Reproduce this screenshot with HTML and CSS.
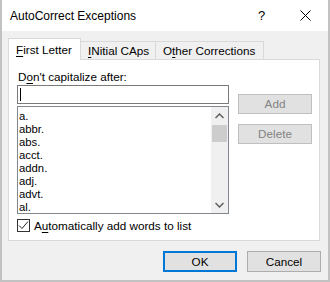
FILE: index.html
```html
<!DOCTYPE html>
<html lang="en">

<head>
  <meta charset="UTF-8" />
  <title>AutoCorrect Exceptions</title>
  <link rel="stylesheet" href="styles.css">
</head>

<body>
  <div class="window">
    <div class="titlebar">
      <span class="title">AutoCorrect Exceptions</span>
      <span class="help">?</span>
      <svg class="close" width="11" height="11" viewBox="0 0 11 11">
        <path d="M0.5 0.5 L10.5 10.5 M10.5 0.5 L0.5 10.5" stroke="#000" stroke-width="1" fill="none" />
      </svg>
    </div>

    <div class="content">
      <div class="tabs">
        <div class="tab tab-active"><u>F</u>irst Letter</div>
        <div class="tab tab-second"><u>I</u>Nitial CAps</div>
        <div class="tab tab-third">O<u>t</u>her Corrections</div>
      </div>

      <div class="panel">
        <div class="row">
          <div class="left">
            <div class="label">D<u>o</u>n't capitalize after:</div>
            <div class="input"><span class="caret"></span></div>
            <div class="list">
              <div class="items">
                <div>a.</div>
                <div>abbr.</div>
                <div>abs.</div>
                <div>acct.</div>
                <div>addn.</div>
                <div>adj.</div>
                <div>advt.</div>
                <div>al.</div>
              </div>
              <div class="scrollbar">
                <div class="arrow">
                  <svg width="9" height="6" viewBox="0 0 9 6">
                    <path d="M0.5 5 L4.5 1 L8.5 5" stroke="#606060" stroke-width="1.5" fill="none" />
                  </svg>
                </div>
                <div class="track"><div class="thumb"></div></div>
                <div class="arrow">
                  <svg width="9" height="6" viewBox="0 0 9 6">
                    <path d="M0.5 1 L4.5 5 L8.5 1" stroke="#606060" stroke-width="1.5" fill="none" />
                  </svg>
                </div>
              </div>
            </div>
          </div>
          <div class="right">
            <div class="btn btn-disabled">Add</div>
            <div class="btn btn-disabled">Delete</div>
          </div>
        </div>

        <div class="check-row">
          <span class="checkbox">
            <svg width="11" height="11" viewBox="0 0 11 11">
              <path d="M1 5.5 L4 8.5 L10 1.5" stroke="#222" stroke-width="1" fill="none" />
            </svg>
          </span>
          <span>A<u>u</u>tomatically add words to list</span>
        </div>
      </div>

      <div class="footer">
        <div class="btn btn-default">OK</div>
        <div class="btn">Cancel</div>
      </div>
    </div>
  </div>
</body>

</html>
```

FILE: styles.css
```css
body {
  margin: 0;
  padding: 0;
  font-family: 'Liberation Sans', Arial, sans-serif;
  font-size: 11.7px;
  color: #000;
  background: #fff;
}

u {
  text-decoration-thickness: 1px;
  text-underline-offset: 2px;
}

.window {
  width: 326px;
  height: 280px;
  border: 2px solid #c2c2c2;
  border-top: none;
  background: #f0f0f0;
  display: flex;
  flex-direction: column;
}

.titlebar {
  height: 31px;
  background: #fff;
  display: flex;
  align-items: center;
  padding-left: 8px;
}

.title {
  flex: 1;
  font-size: 12px;
  line-height: 16px;
}

.help {
  font-size: 13px;
  width: 42px;
}

.close {
  margin-right: 17px;
}

.content {
  flex: 1;
  padding: 7px 7px 0 6px;
}

.tabs {
  display: flex;
  align-items: flex-end;
  height: 21px;
}

.tab {
  box-sizing: border-box;
  height: 18px;
  border: 1px solid #d9d9d9;
  border-bottom: none;
  padding: 2px 0 0 7px;
  line-height: 14px;
  background: #f0f0f0;
  margin-left: -1px;
  white-space: nowrap;
}

.tab-active {
  height: 22px;
  margin-left: 0;
  margin-bottom: -1px;
  background: #fff;
  padding-top: 4px;
  position: relative;
  width: 73px;
}

.tab-second {
  width: 76px;
}

.tab-third {
  width: 109px;
}

.panel {
  box-sizing: border-box;
  width: 312px;
  height: 182px;
  background: #fff;
  border: 1px solid #d9d9d9;
  padding: 8px 7px 0 8px;
}

.row {
  display: flex;
}

.left {
  width: 212px;
}

.label {
  line-height: 15px;
  margin-bottom: 2px;
  padding: 1px 0 0 1px;
  height: 14px;
}

.input {
  box-sizing: border-box;
  height: 19px;
  border: 1px solid #7a7a7a;
  padding: 2px 0 0 2px;
}

.caret {
  display: block;
  width: 1px;
  height: 13px;
  background: #000;
}

.list {
  box-sizing: border-box;
  height: 108px;
  margin-top: 2px;
  border: 1px solid #828790;
  display: flex;
}

.items {
  flex: 1;
  padding: 3px 0 0 1px;
  font-size: 11.3px;
  line-height: 13px;
}

.scrollbar {
  width: 17px;
  background: #f0f0f0;
  display: flex;
  flex-direction: column;
}

.arrow {
  height: 17px;
  display: flex;
  align-items: center;
  justify-content: center;
}

.track {
  flex: 1;
}

.thumb {
  height: 17px;
  background: #cdcdcd;
  margin: 1px 1px 0 1px;
}

.right {
  display: flex;
  flex-direction: column;
  gap: 10px;
  padding: 26px 0 0 9px;
}

.btn {
  box-sizing: border-box;
  width: 74px;
  height: 21px;
  border: 1px solid #adadad;
  background: #e1e1e1;
  text-align: center;
  line-height: 19px;
}

.btn-disabled {
  height: 20px;
  line-height: 18px;
  color: #838383;
  border-color: #bfbfbf;
}

.btn-default {
  border: 2px solid #0078d7;
  line-height: 17px;
}

.check-row {
  display: flex;
  align-items: center;
  margin-top: 4px;
  line-height: 15px;
}

.checkbox {
  box-sizing: border-box;
  width: 13px;
  height: 13px;
  border: 1px solid #333;
  margin-right: 4px;
  display: flex;
  align-items: center;
  justify-content: center;
  background: #fff;
}

.footer {
  display: flex;
  justify-content: flex-end;
  gap: 10px;
  padding-top: 10px;
}
```
